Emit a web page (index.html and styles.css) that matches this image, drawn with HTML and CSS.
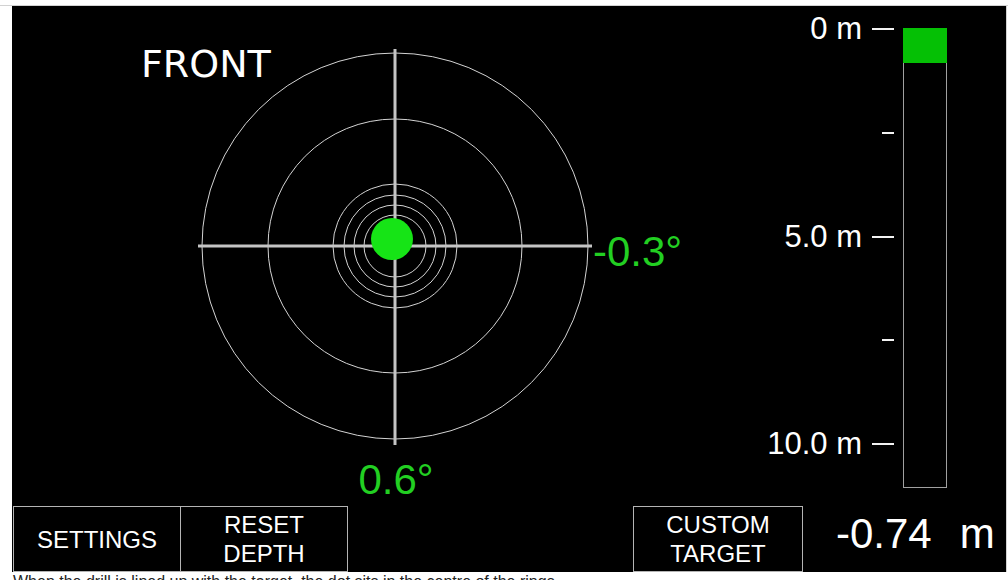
FILE: index.html
```html
<!DOCTYPE html>
<html lang="en">
<head>
<meta charset="utf-8">
<title>Drill alignment</title>
<link rel="stylesheet" href="styles.css">
</head>
<body>
<div class="sheet">
  <main class="screen">
    <section class="view">
      <div class="gauge">
        <h1 class="gauge-title">FRONT</h1>
        <svg class="gauge-svg" width="744" height="500" viewBox="0 0 744 500" aria-label="Tilt target">
          <g class="rings">
            <circle cx="383" cy="240" r="193"/>
            <circle cx="383" cy="240" r="127"/>
            <circle cx="383" cy="240" r="62"/>
            <circle cx="383" cy="240" r="51"/>
            <circle cx="383" cy="240" r="41"/>
            <circle cx="383" cy="240" r="31"/>
          </g>
          <g class="cross">
            <line x1="383" y1="43" x2="383" y2="439"/>
            <line x1="186" y1="240" x2="580" y2="240"/>
          </g>
          <circle class="bubble" cx="380" cy="233" r="21"/>
          <text class="angle" x="581" y="260">-0.3°</text>
          <text class="angle" x="384" y="488" text-anchor="middle">0.6°</text>
        </svg>
      </div>
      <aside class="depth">
        <div class="scale">
          <div class="mark"><span class="mark-label">0 m</span><span class="tick"></span></div>
          <div class="mark"><span class="tick tick-minor"></span></div>
          <div class="mark"><span class="mark-label">5.0 m</span><span class="tick"></span></div>
          <div class="mark"><span class="tick tick-minor"></span></div>
          <div class="mark"><span class="mark-label">10.0 m</span><span class="tick"></span></div>
        </div>
        <div class="bar"><div class="bar-fill" style="height: 35px"></div></div>
      </aside>
    </section>
    <footer class="controls">
      <button class="btn" type="button">SETTINGS</button>
      <button class="btn btn-joined" type="button">RESET<br>DEPTH</button>
      <button class="btn btn-custom" type="button">CUSTOM<br>TARGET</button>
      <output class="readout"><span class="readout-value">-0.74</span><span class="readout-unit">m</span></output>
    </footer>
  </main>
  <p class="caption">When the drill is lined up with the target, the dot sits in the centre of the rings.</p>
</div>
</body>
</html>
```
FILE: styles.css
```css
html, body {
  margin: 0;
  padding: 0;
  background: #fff;
  overflow: hidden;
}

.sheet {
  margin-top: 5px;
  border-top: 1px solid #d2d2d2;
  padding-left: 12px;
}

.screen {
  width: 994px;
  height: 566px;
  background: #000;
  border-right: 1px solid #d2d2d2;
  display: grid;
  grid-template-rows: 500px 66px;
  color: #fff;
  font-family: "Liberation Sans", Arial, sans-serif;
}

.view {
  display: grid;
  grid-template-columns: 756px 238px;
}

/* gauge: heading and drawing share one grid cell */
.gauge {
  display: grid;
}

.gauge > * {
  grid-area: 1 / 1;
}

.gauge-title {
  margin: 39px 0 0 129px;
  align-self: start;
  justify-self: start;
  font-family: "DejaVu Sans", sans-serif;
  font-size: 38px;
  font-weight: normal;
  line-height: 1;
  color: #fff;
}

.gauge-svg {
  display: block;
}

.rings circle {
  fill: none;
  stroke: #d4d4d4;
  stroke-width: 1;
}

.cross line {
  stroke: #c4c4c4;
  stroke-width: 3;
}

.bubble {
  fill: #16e416;
}

.angle {
  font-family: "Liberation Sans", Arial, sans-serif;
  font-size: 42px;
  fill: #22cf22;
}

/* depth scale */
.depth {
  display: flex;
  align-items: flex-start;
  gap: 9px;
}

.scale {
  width: 126px;
  flex-shrink: 0;
  height: 451px;
  margin-top: 5px;
  display: flex;
  flex-direction: column;
  justify-content: space-between;
}

.mark {
  height: 36px;
  display: flex;
  align-items: center;
  justify-content: flex-end;
  gap: 10px;
}

.mark-label {
  font-size: 31px;
  line-height: 36px;
  color: #fff;
  white-space: nowrap;
}

.tick {
  flex-shrink: 0;
  width: 22px;
  height: 2px;
  background: #f2f2f2;
}

.tick-minor {
  width: 12px;
}

.bar {
  flex-shrink: 0;
  margin-top: 22px;
  width: 44px;
  height: 460px;
  box-sizing: border-box;
  border: 1px solid #a0a0a0;
}

.bar-fill {
  margin: -1px -1px 0;
  background: #05c005;
}

/* bottom controls */
.controls {
  display: flex;
  align-items: stretch;
  padding-left: 1px;
}

.btn {
  width: 168px;
  margin: 0;
  padding: 0;
  box-sizing: border-box;
  border: 1px solid #b4b4b4;
  background: #000;
  color: #fff;
  font-family: "Liberation Sans", Arial, sans-serif;
  font-size: 24px;
  line-height: 29px;
  text-align: center;
}

.btn-joined {
  margin-left: -1px;
}

.btn-custom {
  width: 170px;
  margin-left: 285px;
}

.readout {
  align-self: flex-start;
  display: flex;
  gap: 28px;
  margin: 7px 0 0 33px;
  font-size: 42px;
  line-height: 42px;
  color: #fff;
  white-space: nowrap;
}

.caption {
  margin: 0;
  padding: 1px 0 0 1px;
  font-family: "Liberation Sans", Arial, sans-serif;
  font-size: 16px;
  line-height: 18px;
  color: #222;
  white-space: nowrap;
}
```
